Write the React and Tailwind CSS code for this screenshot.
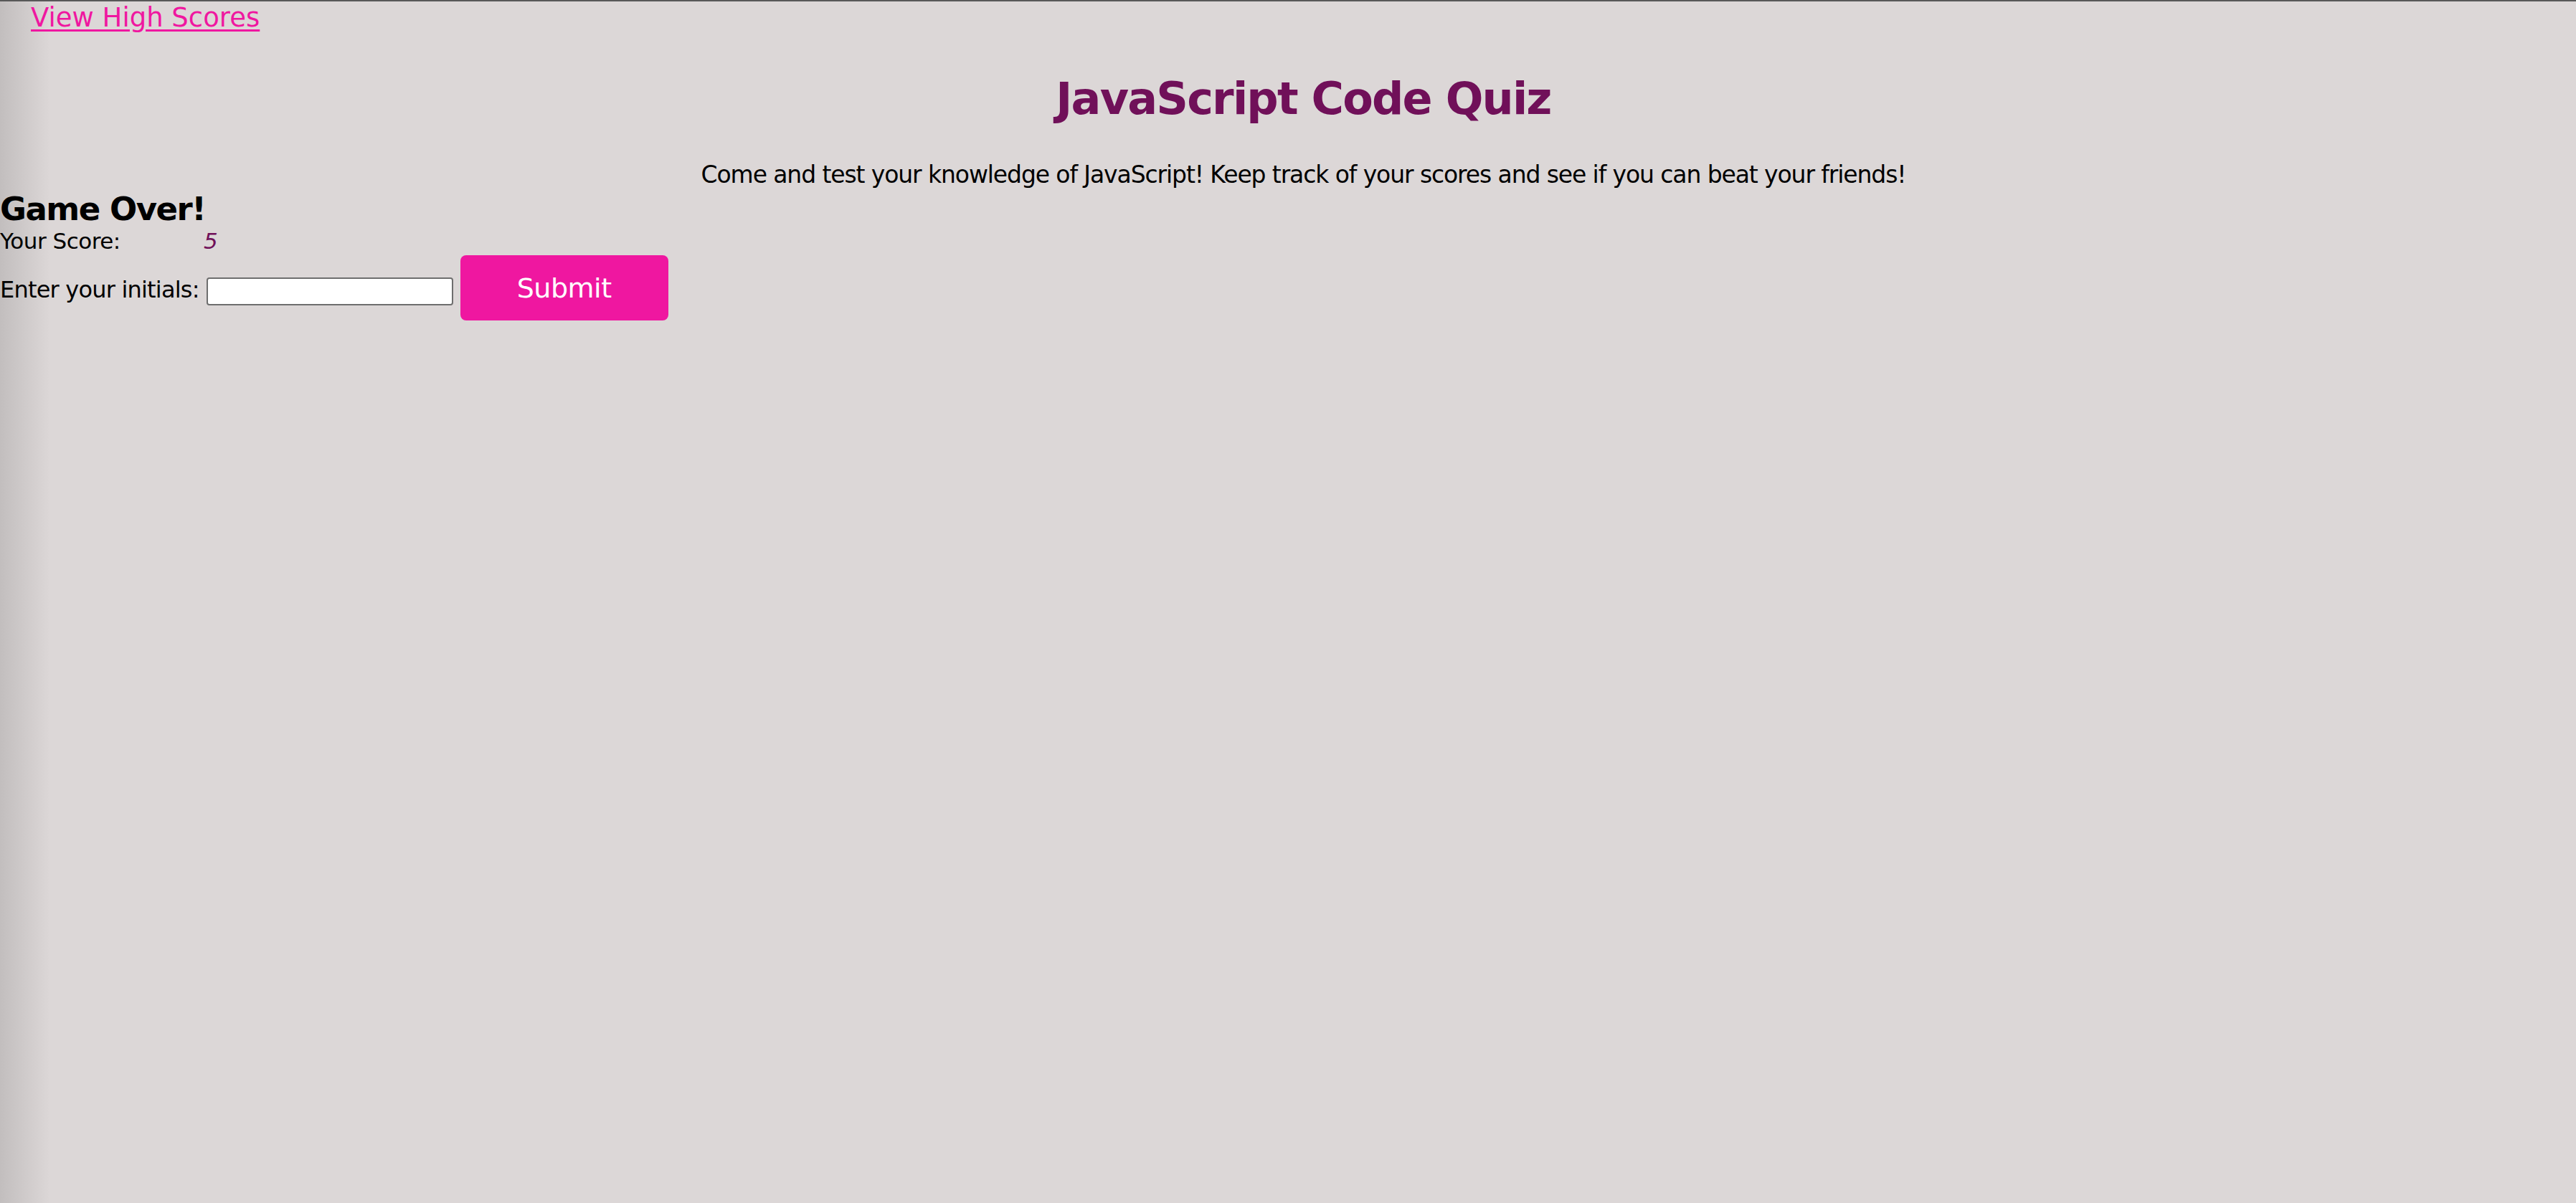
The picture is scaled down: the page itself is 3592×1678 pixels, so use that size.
export default function App() {
  return (
    <div className="min-h-screen border-t-2 border-[#585858] bg-[linear-gradient(to_right,#c2bebe,#dcd7d7_70px)] font-['DejaVu_Sans',sans-serif] text-black">
      <header className="pl-[43px]">
        <nav className="pt-[5px]">
          <a href="#" className="text-[37px] leading-[36px] text-[#ef17a0] underline underline-offset-[4px]">
            View High Scores
          </a>
        </nav>
        <h1 className="mt-[62px] text-center text-[62px] font-bold leading-[64px] tracking-[-1.8px] text-[#701059]">
          JavaScript Code Quiz
        </h1>
        <p className="mt-[56px] text-center text-[33px] leading-[36px] tracking-[-1.1px]">
          Come and test your knowledge of JavaScript! Keep track of your scores and see if you can beat your friends!
        </p>
      </header>

      <main>
        <h2 className="mt-[6px] text-[45px] font-bold leading-[48px] tracking-[-1.5px]">Game Over!</h2>
        <div className="mt-[3px] flex text-[31px] leading-[34px] tracking-[-0.5px]">
          <span className="w-[284px]">Your Score:</span>
          <span className="italic text-[#701059]">5</span>
        </div>
        <form className="mt-[3px] flex items-baseline gap-[10px] text-[32px]" onSubmit={(e) => e.preventDefault()}>
          <label htmlFor="initials" className="leading-[36px] tracking-[-0.8px]">Enter your initials:</label>
          <input
            id="initials"
            type="text"
            className="h-[39px] w-[344px] rounded-[4px] border-2 border-[#6e6e6e] bg-white px-1 text-[26px] outline-none"
          />
          <button
            type="submit"
            className="h-[91px] w-[290px] rounded-[8px] bg-[#ef17a0] text-[38px] leading-[40px] tracking-[-0.5px] text-white"
          >
            Submit
          </button>
        </form>
      </main>
    </div>
  );
}
